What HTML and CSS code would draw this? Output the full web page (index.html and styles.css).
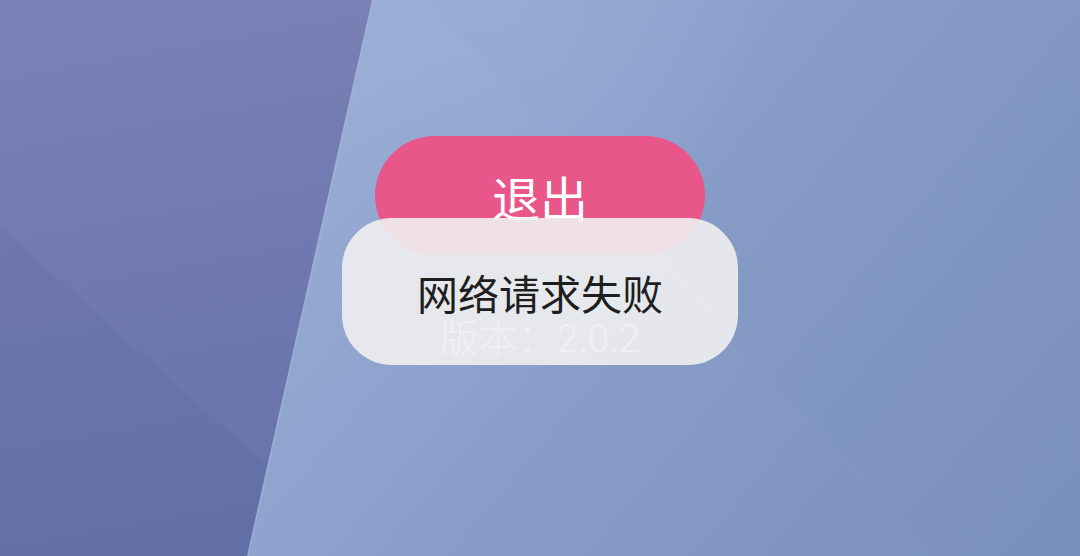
FILE: index.html
```html
<!DOCTYPE html>
<html lang="zh-CN">
<head>
<meta charset="utf-8">
<title>退出</title>
<link rel="stylesheet" href="styles.css">
</head>
<body>
<main class="screen">
  <svg class="wallpaper" viewBox="0 0 1080 556" width="1080" height="556" aria-hidden="true">
    <defs>
      <linearGradient id="gRight" gradientUnits="userSpaceOnUse" x1="420" y1="0" x2="1080" y2="556">
        <stop offset="0" stop-color="#98acd5"/>
        <stop offset="0.45" stop-color="#879cc7"/>
        <stop offset="1" stop-color="#7a91bc"/>
      </linearGradient>
      <linearGradient id="gLeft" gradientUnits="userSpaceOnUse" x1="100" y1="0" x2="200" y2="556">
        <stop offset="0" stop-color="#7a81b6"/>
        <stop offset="1" stop-color="#6572a9"/>
      </linearGradient>
      <radialGradient id="gGlow" gradientUnits="userSpaceOnUse" cx="520" cy="20" r="240">
        <stop offset="0" stop-color="#a3b5dc" stop-opacity="0.35"/>
        <stop offset="1" stop-color="#a3b5dc" stop-opacity="0"/>
      </radialGradient>
    </defs>
    <rect width="1080" height="556" fill="url(#gRight)"/>
    <rect width="1080" height="556" fill="url(#gGlow)"/>
    <polygon points="430,0 1080,0 1080,556 930,556" fill="#5a6f9e" opacity="0.025"/>
    <line x1="430" y1="0" x2="930" y2="556" stroke="#9cb0d8" stroke-width="1" opacity="0.22"/>
    <polygon points="0,0 372,0 247,556 0,556" fill="url(#gLeft)"/>
    <polygon points="0,227 266,465 247,556 0,556" fill="#2f3c78" opacity="0.05"/>
    <line x1="373" y1="0" x2="248" y2="556" stroke="#a9bbe0" stroke-width="1.5" opacity="0.45"/>
  </svg>

  <section class="content">
    <button class="exit-btn" type="button">退出</button>
    <p class="version">版本：2.0.2</p>
    <div class="toast" role="status">网络请求失败</div>
  </section>
</main>
</body>
</html>
```

FILE: styles.css
```css
* {
  box-sizing: border-box;
}

html,
body {
  margin: 0;
  padding: 0;
}

body {
  width: 1080px;
  height: 556px;
  overflow: hidden;
  font-family: "Noto Sans CJK SC", "Noto Sans", sans-serif;
}

.screen {
  display: grid;
  width: 1080px;
  height: 556px;
}

.wallpaper {
  grid-area: 1 / 1;
  display: block;
}

.content {
  grid-area: 1 / 1;
  position: relative;
  display: flex;
  flex-direction: column;
  align-items: center;
  padding-top: 136px;
}

.exit-btn {
  width: 330px;
  height: 119px;
  margin: 0;
  padding: 0;
  border: none;
  border-radius: 60px;
  background: #e9578a;
  color: #ffffff;
  font-family: "Noto Sans CJK SC", sans-serif;
  font-size: 48px;
  line-height: 1;
  display: flex;
  align-items: center;
  justify-content: center;
}

.version {
  margin: 58px 0 0;
  font-family: Roboto, "Noto Sans CJK SC", sans-serif;
  font-size: 39px;
  line-height: 52px;
  color: rgba(255, 255, 255, 0.85);
  font-weight: 300;
}

.toast {
  position: absolute;
  top: 218px;
  left: 342px;
  width: 396px;
  height: 147px;
  border-radius: 50px;
  background: rgba(240, 239, 239, 0.9);
  color: #1e1e1e;
  font-family: "Noto Sans CJK SC", sans-serif;
  font-size: 41px;
  display: flex;
  align-items: center;
  justify-content: center;
}
```
